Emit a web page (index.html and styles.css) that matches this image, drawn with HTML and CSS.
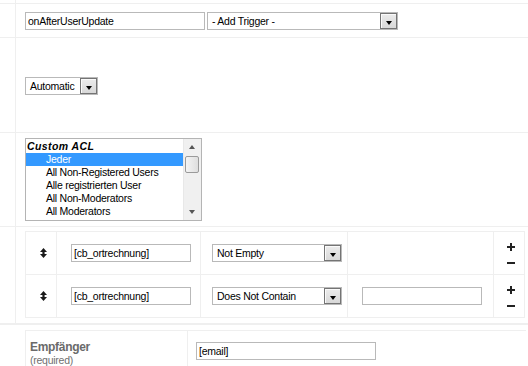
FILE: index.html
```html
<!DOCTYPE html>
<html>
<head>
<meta charset="utf-8">
<link rel="stylesheet" href="styles.css">
</head>
<body>
<div class="sect">
  <div class="row r0"><div class="lab"></div><div class="val"></div></div>
  <div class="row r1">
    <div class="lab"></div>
    <div class="val">
      <span class="inp w180">onAfterUserUpdate</span>
      <span class="sel w191"><span class="stxt">- Add Trigger -</span><span class="btn"><i class="tri"></i></span></span>
    </div>
  </div>
  <div class="row r2">
    <div class="lab"></div>
    <div class="val mid">
      <span class="sel w73"><span class="stxt">Automatic</span><span class="btn"><i class="tri"></i></span></span>
    </div>
  </div>
  <div class="row r3">
    <div class="lab"></div>
    <div class="val">
      <div class="list">
        <div class="opts">
          <div class="grp">Custom ACL</div>
          <div class="opt on">Jeder</div>
          <div class="opt">All Non-Registered Users</div>
          <div class="opt">Alle registrierten User</div>
          <div class="opt">All Non-Moderators</div>
          <div class="opt">All Moderators</div>
        </div>
        <div class="sbar">
          <span class="arr up"></span>
          <span class="thumb"></span>
          <span class="arr dn"></span>
        </div>
      </div>
    </div>
  </div>
  <div class="row r4">
    <div class="lab"></div>
    <div class="val">
      <div class="cond">
        <div class="cell c1"><svg class="mv" width="7" height="10" viewBox="0 0 7 10"><path d="M3.5 0 L7 4 H4.6 V6 H7 L3.5 10 L0 6 H2.4 V4 H0 Z" fill="#1a1a1a"/></svg></div>
        <div class="cell c2"><span class="inp w120">[cb_ortrechnung]</span></div>
        <div class="cell c3"><span class="sel w130"><span class="stxt">Not Empty</span><span class="btn"><i class="tri"></i></span></span></div>
        <div class="cell c4"></div>
        <div class="cell c5"><svg class="plus" width="8" height="8" viewBox="0 0 8 8"><path d="M3 0 H5 V3 H8 V5 H5 V8 H3 V5 H0 V3 H3 Z" fill="#222"/></svg><span class="minus"></span></div>

        <div class="cell c1"><svg class="mv" width="7" height="10" viewBox="0 0 7 10"><path d="M3.5 0 L7 4 H4.6 V6 H7 L3.5 10 L0 6 H2.4 V4 H0 Z" fill="#1a1a1a"/></svg></div>
        <div class="cell c2"><span class="inp w120">[cb_ortrechnung]</span></div>
        <div class="cell c3"><span class="sel w130"><span class="stxt">Does Not Contain</span><span class="btn"><i class="tri"></i></span></span></div>
        <div class="cell c4"><span class="inp w120"></span></div>
        <div class="cell c5"><svg class="plus" width="8" height="8" viewBox="0 0 8 8"><path d="M3 0 H5 V3 H8 V5 H5 V8 H3 V5 H0 V3 H3 Z" fill="#222"/></svg><span class="minus"></span></div>
      </div>
    </div>
  </div>
</div>
<div class="sect2">
  <div class="fld">
    <div class="flab"><div class="fname">Empfänger</div><div class="freq">(required)</div></div>
    <div class="fval"><span class="inp w180">[email]</span></div>
  </div>
</div>
</body>
</html>
```

FILE: styles.css
```css
html, body {
  margin: 0;
  padding: 0;
  background: #fff;
  font-family: "Liberation Sans", Arial, sans-serif;
  font-size: 10.5px;
  letter-spacing: -0.25px;
  color: #000;
}
.sect {
  width: 528px;
}
.row {
  display: flex;
  border-bottom: 1px solid #efefef;
}
.lab {
  width: 15px;
  flex: none;
  border-right: 1px solid #efefef;
}
.val {
  flex: 1;
  padding-left: 9px;
  display: flex;
  align-items: flex-start;
}
.r0 { height: 3px; }
.r0 .val { padding: 0; }
.r1 .val { padding-top: 8px; box-sizing: border-box; height: 33px; gap: 2px; }
.r2 .val { height: 94px; align-items: center; }
.r2 .val .sel { margin-top: 2px; }
.r3 .val { height: 93px; padding-top: 5px; box-sizing: border-box; }
.r4 .val { height: 96px; padding-top: 4px; box-sizing: border-box; }

.inp {
  display: inline-block;
  box-sizing: border-box;
  height: 18px;
  border: 1px solid #b9b9b9;
  padding: 0 2px;
  line-height: 17px;
  white-space: nowrap;
  overflow: hidden;
  background: #fff;
}
.w180 { width: 180px; }
.w120 { width: 120px; }
.sel {
  display: inline-flex;
  box-sizing: border-box;
  height: 18px;
  border: 1px solid #b9b9b9;
  background: #fff;
}
.w191 { width: 191px; }
.w73 { width: 73px; }
.w130 { width: 130px; }
.stxt {
  flex: 1;
  padding-left: 4px;
  line-height: 17px;
  white-space: nowrap;
  overflow: hidden;
}
.btn {
  width: 17px;
  box-sizing: border-box;
  height: 16px;
  border: 1px solid #747474;
  background: linear-gradient(#ececec, #d8d8d8);
  box-shadow: inset 1px 1px 0 #fafafa;
  display: flex;
  justify-content: center;
  align-items: flex-start;
  padding-top: 7px;
}
.tri {
  display: block;
  width: 0;
  height: 0;
  border-left: 3.5px solid transparent;
  border-right: 3.5px solid transparent;
  border-top: 4px solid #000;
}

.list {
  width: 177px;
  height: 83px;
  box-sizing: border-box;
  border: 1px solid #b4b4b4;
  display: flex;
}
.opts {
  flex: 1;
  padding-top: 1px;
}
.grp {
  font-weight: bold;
  font-style: italic;
  height: 13px;
  line-height: 13px;
  padding-left: 1px;
  letter-spacing: 0.4px;
}
.opt {
  height: 13px;
  line-height: 13px;
  padding-left: 20px;
  white-space: nowrap;
}
.opt.on {
  background: #3399ff;
  color: #fff;
}
.sbar {
  width: 17px;
  flex: none;
  background: #f0f0f0;
  border-left: 1px solid #e8e8e8;
  position: relative;
}
.arr {
  position: absolute;
  left: 5px;
  width: 0;
  height: 0;
  border-left: 3.5px solid transparent;
  border-right: 3.5px solid transparent;
}
.arr.up { top: 6px; border-bottom: 4px solid #555; }
.arr.dn { bottom: 6px; border-top: 4px solid #555; }
.thumb {
  position: absolute;
  left: 1px;
  top: 17px;
  width: 12px;
  height: 15px;
  border: 1px solid #9a9a9a;
  border-radius: 2px;
  background: linear-gradient(90deg, #f4f4f4, #dedede);
}

.cond {
  display: grid;
  grid-template-columns: 31px 144px 147px 146px 31px;
  grid-auto-rows: 43px;
  border-top: 1px solid #efefef;
  border-left: 1px solid #efefef;
  width: max-content;
}
.cell {
  box-sizing: border-box;
  border-right: 1px solid #efefef;
  border-bottom: 1px solid #efefef;
  display: flex;
  align-items: center;
}
.c1 { justify-content: center; }
.c2 { padding-left: 14px; }
.c3 { padding-left: 11px; }
.c4 { padding-left: 14px; }
.c5 { flex-direction: column; justify-content: center; padding-left: 3px; }
.mv { display: block; position: relative; left: 2px; top: 0; }
.plus { display: block; }
.minus {
  display: block;
  width: 8px;
  height: 2px;
  background: #222;
  margin-top: 11px;
}

.sect2 {
  border-top: 1px solid #efefef;
  padding: 5px 0 0 25px;
}
.fld {
  display: flex;
  border-top: 1px solid #efefef;
  border-left: 1px solid #efefef;
  width: 500px;
  height: 40px;
}
.flab {
  width: 162px;
  box-sizing: border-box;
  padding: 9px 0 0 4px;
  border-right: 1px solid #efefef;
}
.fname {
  font-size: 12px;
  color: #6a6a6a;
  line-height: 14px;
  font-weight: bold;
  letter-spacing: -0.3px;
}
.freq {
  font-size: 10.5px;
  color: #707070;
  line-height: 13px;
}
.fval { padding: 11px 0 0 8px; }
```
